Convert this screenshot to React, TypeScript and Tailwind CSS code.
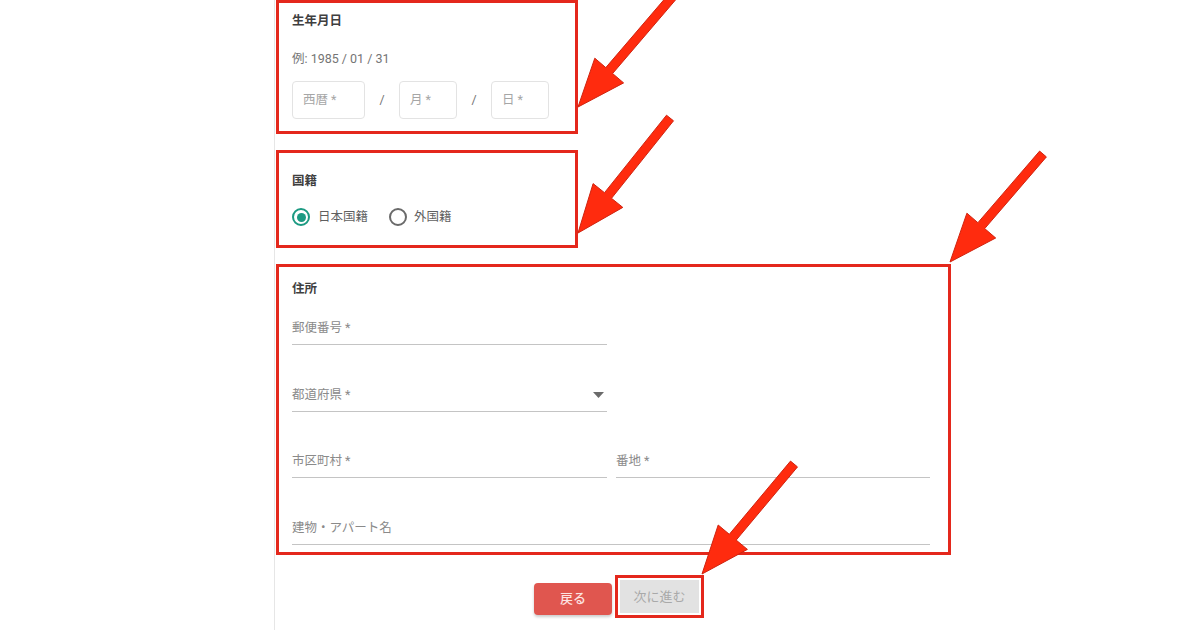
import React from "react";

type Pt = [number, number];

function arrowPoints(tail: Pt, tip: Pt, shaft = 9, headLen = 48, headW = 38): string {
  const dx = tip[0] - tail[0];
  const dy = tip[1] - tail[1];
  const len = Math.hypot(dx, dy);
  const ux = dx / len;
  const uy = dy / len;
  const px = -uy;
  const py = ux;
  const bx = tip[0] - ux * headLen;
  const by = tip[1] - uy * headLen;
  const pts: Pt[] = [
    [tail[0] + (px * shaft) / 2, tail[1] + (py * shaft) / 2],
    [bx + (px * shaft) / 2, by + (py * shaft) / 2],
    [bx + (px * headW) / 2, by + (py * headW) / 2],
    [tip[0], tip[1]],
    [bx - (px * headW) / 2, by - (py * headW) / 2],
    [bx - (px * shaft) / 2, by - (py * shaft) / 2],
    [tail[0] - (px * shaft) / 2, tail[1] - (py * shaft) / 2],
  ];
  return pts.map((p) => `${p[0].toFixed(1)},${p[1].toFixed(1)}`).join(" ");
}

const arrows: [Pt, Pt][] = [
  [[673, -4], [578, 107]],
  [[670, 118], [578, 233]],
  [[1043, 154], [950, 262]],
  [[794, 464], [702, 574]],
];

function UnderlineField({ label, className, select }: { label: string; className: string; select?: boolean }) {
  return (
    <div className={`flex items-center justify-between border-b border-[#c4c4c4] pb-[8px] ${className}`}>
      <span className="text-[12.5px] leading-[16px] text-[#8a8a8a]">{label}</span>
      {select && (
        <svg width="11" height="6" viewBox="0 0 11 6" className="mr-[3px]">
          <polygon points="0,0 11,0 5.5,6" fill="#6b6b6b" />
        </svg>
      )}
    </div>
  );
}

function Box({ label, className }: { label: string; className: string }) {
  return (
    <div className={`flex h-[38px] items-center rounded-[4px] border border-[#e3e3e3] pl-[10px] text-[12.5px] text-[#a6a6a6] ${className}`}>
      {label}
    </div>
  );
}

export default function App() {
  return (
    <div
      className="relative h-[630px] w-[1200px] overflow-hidden bg-white"
      style={{ fontFamily: "Roboto, 'Noto Sans CJK JP', sans-serif" }}
    >
      <div className="ml-[274px] flex h-full flex-col border-l border-[#e6e6e6] pl-[1px]">
        {/* 生年月日 */}
        <section className="flex w-[302px] flex-col border-[3px] border-[#e4281c] pb-[12px] pl-[13px] pt-[10px]">
          <h3 className="text-[12.5px] font-bold leading-[16px] text-[#3f3f3f]">生年月日</h3>
          <p className="mt-[22px] text-[12.5px] leading-[16px] text-[#757575]">例: 1985 / 01 / 31</p>
          <div className="mt-[14px] flex items-center">
            <Box label="西暦 *" className="w-[73px]" />
            <span className="w-[34px] text-center text-[12.5px] text-[#757575]">/</span>
            <Box label="月 *" className="w-[58px]" />
            <span className="w-[34px] text-center text-[12.5px] text-[#757575]">/</span>
            <Box label="日 *" className="w-[58px]" />
          </div>
        </section>

        {/* 国籍 */}
        <section className="mt-[16px] flex w-[302px] flex-col border-[3px] border-[#e4281c] pb-[18px] pl-[13px] pt-[20px]">
          <h3 className="text-[12.5px] font-bold leading-[16px] text-[#3f3f3f]">国籍</h3>
          <div className="mt-[18px] flex h-[20px] items-center">
            <span className="flex h-[18px] w-[18px] items-center justify-center rounded-full border-2 border-[#1c9a82]">
              <span className="h-[9px] w-[9px] rounded-full bg-[#1c9a82]" />
            </span>
            <span className="ml-[8px] text-[12.5px] text-[#5f5f5f]">日本国籍</span>
            <span className="ml-[21px] h-[18px] w-[18px] rounded-full border-2 border-[#6a6a6a]" />
            <span className="ml-[7px] text-[12.5px] text-[#5f5f5f]">外国籍</span>
          </div>
        </section>

        {/* 住所 */}
        <section className="mt-[16px] flex w-[675px] flex-col border-[3px] border-[#e4281c] pb-[7px] pl-[13px] pr-[17px] pt-[14px]">
          <h3 className="text-[12.5px] font-bold leading-[16px] text-[#3f3f3f]">住所</h3>
          <UnderlineField label="郵便番号 *" className="mt-[23px] w-[315px]" />
          <UnderlineField label="都道府県 *" className="mt-[42px] w-[315px]" select />
          <div className="mt-[41px] flex gap-[9px]">
            <UnderlineField label="市区町村 *" className="w-[315px]" />
            <UnderlineField label="番地 *" className="w-[314px]" />
          </div>
          <UnderlineField label="建物・アパート名" className="mt-[42px] w-[638px]" />
        </section>

        {/* Buttons */}
        <div className="mt-[20px] flex w-[675px] items-start justify-center pl-[11px]">
          <button className="mt-[8px] h-[32px] w-[78px] rounded-[4px] bg-[#e0564f] text-[13px] font-medium text-[#fde3e1] shadow-[0_2px_3px_rgba(0,0,0,0.2)]">
            戻る
          </button>
          <div className="ml-[3px] border-[3px] border-[#e4281c] p-[2px]">
            <div className="flex h-[33px] w-[79px] items-center justify-center bg-[#e2e2e2] text-[13px] text-[#a9a9a9]">
              次に進む
            </div>
          </div>
        </div>
      </div>

      <svg className="pointer-events-none absolute inset-0" width="1200" height="630" viewBox="0 0 1200 630">
        {arrows.map(([a, b], i) => (
          <polygon key={i} points={arrowPoints(a, b)} fill="#ff2b0e" stroke="#cf2410" strokeWidth="1" strokeLinejoin="round" />
        ))}
      </svg>
    </div>
  );
}
